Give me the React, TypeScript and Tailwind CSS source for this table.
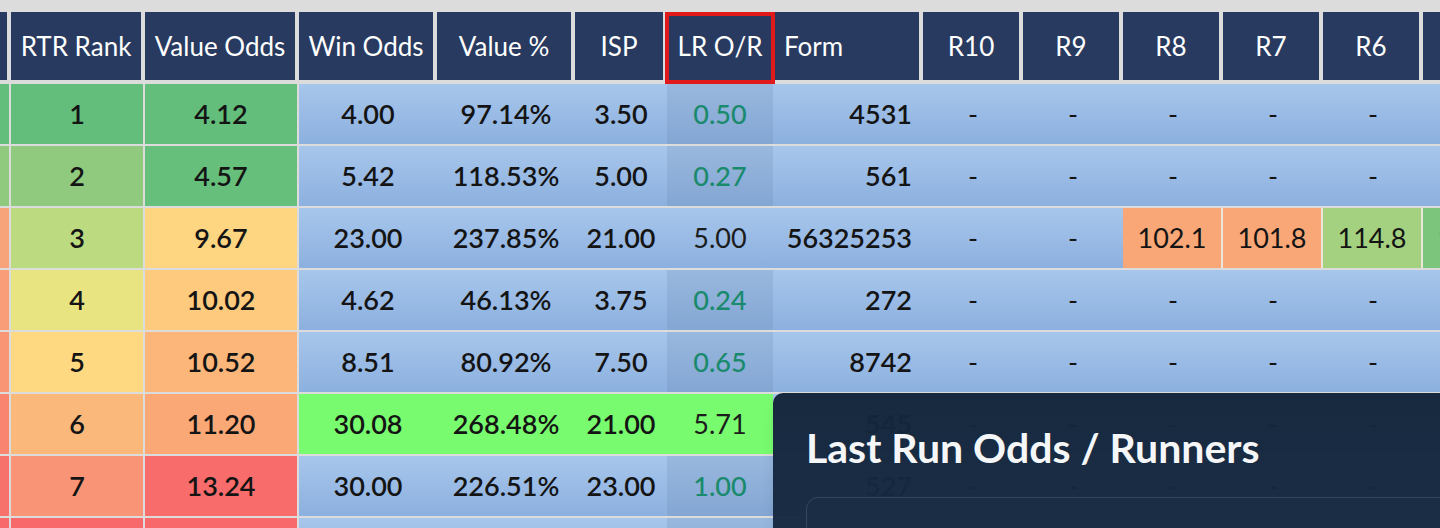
import React from 'react';

type RCell = { v: string; bg?: string };

interface Row {
    c0: string
    rank: string
    rankBg: string
    vo: string
    voBg: string
    hot?: boolean
    wo: string
    vp: string
    isp: string
    lr: string
    lrPlain?: boolean
    form: string
    r: RCell[]
}

const blue = 'bg-linear-to-b from-[#a7c6eb] to-[#8cb0df]';
const shaded = 'bg-linear-to-b from-[#99b8de] to-[#83a6d3]';
const green = 'bg-[#78fb6e]';

const headers = [
    { label: '', w: 'w-[11px] pr-[4px]' },
    { label: 'RTR Rank', w: 'w-[134px] pr-[4px]' },
    { label: 'Value Odds', w: 'w-[154px] pr-[4px]' },
    { label: 'Win Odds', w: 'w-[138px] pr-[4px]' },
    { label: 'Value %', w: 'w-[138px] pr-[4px]' },
    { label: 'ISP', w: 'w-[90px] pr-[2px]' },
    { label: 'LR O/R', w: 'w-[110px]' },
    { label: 'Form', w: 'w-[148px] pr-[4px]', left: true },
    { label: 'R10', w: 'w-[100px] pr-[4px]' },
    { label: 'R9', w: 'w-[100px] pr-[4px]' },
    { label: 'R8', w: 'w-[100px] pr-[4px]' },
    { label: 'R7', w: 'w-[100px] pr-[4px]' },
    { label: 'R6', w: 'w-[100px] pr-[4px]' },
    { label: 'R5', w: 'w-[100px] pr-[4px]' },
];

const dashes: RCell[] = [{ v: '-' }, { v: '-' }, { v: '-' }, { v: '-' }, { v: '-' }, { v: '-' }];

const rows: Row[] = [
    { c0: 'bg-[#63be7b]', rank: '1', rankBg: 'bg-[#63be7b]', vo: '4.12', voBg: 'bg-[#63be7b]', wo: '4.00', vp: '97.14%', isp: '3.50', lr: '0.50', form: '4531', r: dashes },
    { c0: 'bg-[#8fca7e]', rank: '2', rankBg: 'bg-[#8fca7e]', vo: '4.57', voBg: 'bg-[#66bf7b]', wo: '5.42', vp: '118.53%', isp: '5.00', lr: '0.27', form: '561', r: dashes },
    {
        c0: 'bg-[#f8a47a]', rank: '3', rankBg: 'bg-[#bcdb81]', vo: '9.67', voBg: 'bg-[#fed580]', wo: '23.00', vp: '237.85%', isp: '21.00', lr: '5.00', lrPlain: true, form: '56325253',
        r: [{ v: '-' }, { v: '-' }, { v: '102.1', bg: 'bg-[#f9a777]' }, { v: '101.8', bg: 'bg-[#f9a777]' }, { v: '114.8', bg: 'bg-[#a3d17f]' }, { v: '118.5', bg: 'bg-[#7cc57c]' }],
    },
    { c0: 'bg-[#f99d78]', rank: '4', rankBg: 'bg-[#e8e482]', vo: '10.02', voBg: 'bg-[#fdca7e]', wo: '4.62', vp: '46.13%', isp: '3.75', lr: '0.24', form: '272', r: dashes },
    { c0: 'bg-[#f99475]', rank: '5', rankBg: 'bg-[#fed981]', vo: '10.52', voBg: 'bg-[#fcb67a]', wo: '8.51', vp: '80.92%', isp: '7.50', lr: '0.65', form: '8742', r: dashes },
    { c0: 'bg-[#f98570]', rank: '6', rankBg: 'bg-[#fbb87b]', vo: '11.20', voBg: 'bg-[#fba877]', hot: true, wo: '30.08', vp: '268.48%', isp: '21.00', lr: '5.71', lrPlain: true, form: '545', r: dashes },
    { c0: 'bg-[#f8726c]', rank: '7', rankBg: 'bg-[#f99576]', vo: '13.24', voBg: 'bg-[#f86c6b]', wo: '30.00', vp: '226.51%', isp: '23.00', lr: '1.00', form: '527', r: dashes },
    { c0: 'bg-[#f8696b]', rank: '', rankBg: 'bg-[#f8696b]', vo: '', voBg: 'bg-[#f8696b]', wo: '', vp: '', isp: '', lr: '', form: '', r: [] },
];

function BodyRow({ row }: { row: Row }) {
    const mid = row.hot ? green : blue;
    const lrBg = row.hot ? green : row.lrPlain ? blue : shaded;
    const cell = 'h-full flex items-center justify-center';
    return (
        <div className="flex h-[60px] shrink-0 text-[27px] font-semibold text-[#141414]">
            <div className={`w-[11px] border-r-2 border-[#dcdcdc] ${row.c0}`} />
            <div className={`${cell} w-[134px] border-r-2 border-[#dcdcdc] ${row.rankBg}`}>{row.rank}</div>
            <div className={`${cell} w-[154px] border-r-2 border-[#dcdcdc] ${row.voBg}`}>{row.vo}</div>
            <div className={`${cell} w-[138px] ${mid}`}>{row.wo}</div>
            <div className={`${cell} w-[138px] ${mid}`}>{row.vp}</div>
            <div className={`${cell} w-[92px] ${mid}`}>{row.isp}</div>
            <div className={`${cell} w-[106px] ${lrBg} ${row.lrPlain ? 'font-normal text-[#1c1c1c]' : 'font-medium text-[#1a8a6c]'}`}>{row.lr}</div>
            <div className={`h-full flex items-center justify-end pr-[11px] w-[150px] ${blue}`}>{row.form}</div>
            {[0, 1, 2, 3, 4, 5].map((i) => {
                const c = row.r[i];
                return (
                    <div
                        key={i}
                        className={`${cell} w-[100px] shrink-0 font-normal ${c && c.bg ? `${c.bg} border-r-2 border-[#ebe5da]` : blue}`}
                    >
                        {c ? c.v : ''}
                    </div>
                );
            })}
        </div>
    );
}

export default function App() {
    return (
        <div className="relative h-[528px] w-[1440px] overflow-hidden bg-[#dcdcdc] font-['Lato','Liberation_Sans',sans-serif]">
            <div className="flex flex-col gap-[2px] pt-[12px] w-[1530px]">
                <div className="flex h-[68px] shrink-0 mb-[2px] text-[26px] text-white">
                    {headers.map((h, i) => (
                        <div key={i} className={`h-full shrink-0 ${h.w}`}>
                            <div className={`h-full bg-[#283a5f] flex items-center ${h.left ? 'justify-start pl-[9px]' : 'justify-center'}`}>
                                {h.label}
                            </div>
                        </div>
                    ))}
                </div>
                {rows.map((r, i) => (
                    <BodyRow key={i} row={r} />
                ))}
            </div>

            {/* highlight around LR O/R header */}
            <div className="absolute left-[665px] top-[12px] w-[110px] h-[72px] border-[4px] border-[#e0191b]" />

            {/* tooltip panel */}
            <div className="absolute left-[773px] top-[393px] w-[720px] h-[180px] rounded-tl-[10px] bg-linear-to-b from-[#12253a]/[0.97] to-[#182a43]/[0.97] pl-[33px] pt-[32px] shadow-lg">
                <div className="text-[41px] leading-[46px] font-bold text-[#f4f6f8]">Last Run Odds / Runners</div>
                <div className="mt-[26px] h-[80px] rounded-[12px] border border-[#34475f] bg-[#1b2c45]" />
            </div>
        </div>
    );
}
